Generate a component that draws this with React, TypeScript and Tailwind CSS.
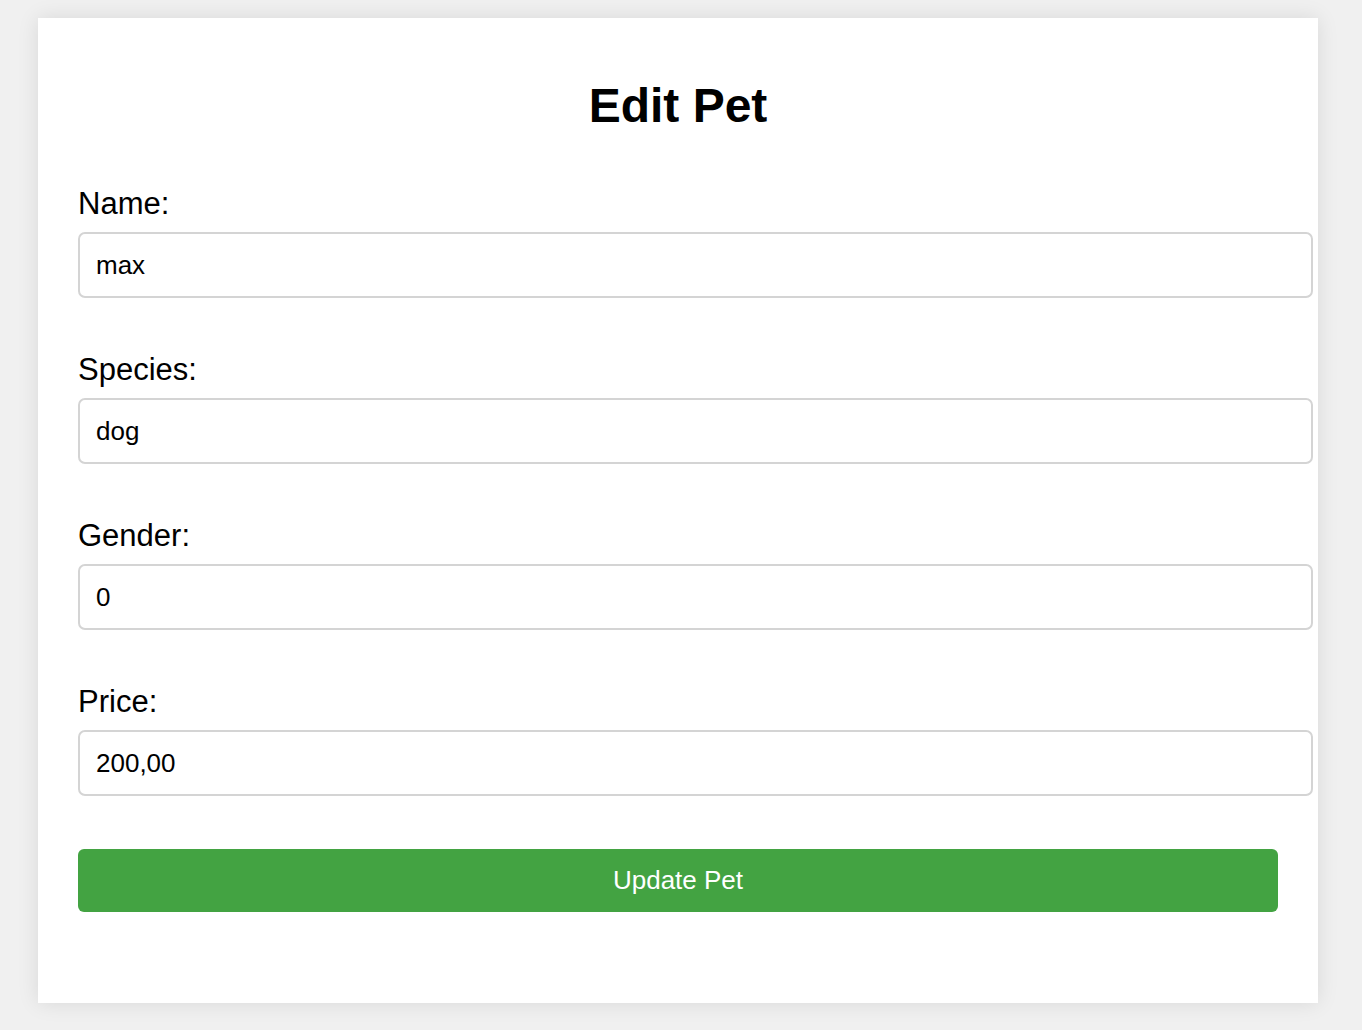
import React from 'react';

const fields = [
  { label: 'Name:', value: 'max' },
  { label: 'Species:', value: 'dog' },
  { label: 'Gender:', value: '0' },
  { label: 'Price:', value: '200,00' },
];

function App() {
  return (
    <div className="min-h-[1030px] bg-[#f0f0f0] pt-[18px] pl-[38px] font-['Liberation_Sans',Arial,sans-serif] text-black">
      <div className="w-[1280px] h-[985px] bg-white shadow-[0_0_20px_rgba(0,0,0,0.1)] px-[40px] pt-[64px]">
        <h1 className="text-center text-[48px] leading-[48px] font-bold mb-[59px]">Edit Pet</h1>
        <form className="flex flex-col" onSubmit={(e) => e.preventDefault()}>
          {fields.map((f) => (
            <div key={f.label} className="mb-[57px]">
              <label className="block text-[31px] leading-[30px] mb-[13px]">{f.label}</label>
              <input
                type="text"
                readOnly
                value={f.value}
                className="block w-[1235px] h-[66px] border-2 border-[#d4d4d4] rounded-[7px] pl-[16px] text-[26px] text-black outline-none"
              />
            </div>
          ))}
          <button
            type="submit"
            className="-mt-[4px] w-[1200px] h-[63px] rounded-[6px] bg-[#43a342] text-white text-[26px]"
          >
            Update Pet
          </button>
        </form>
      </div>
    </div>
  );
}

export default App;
